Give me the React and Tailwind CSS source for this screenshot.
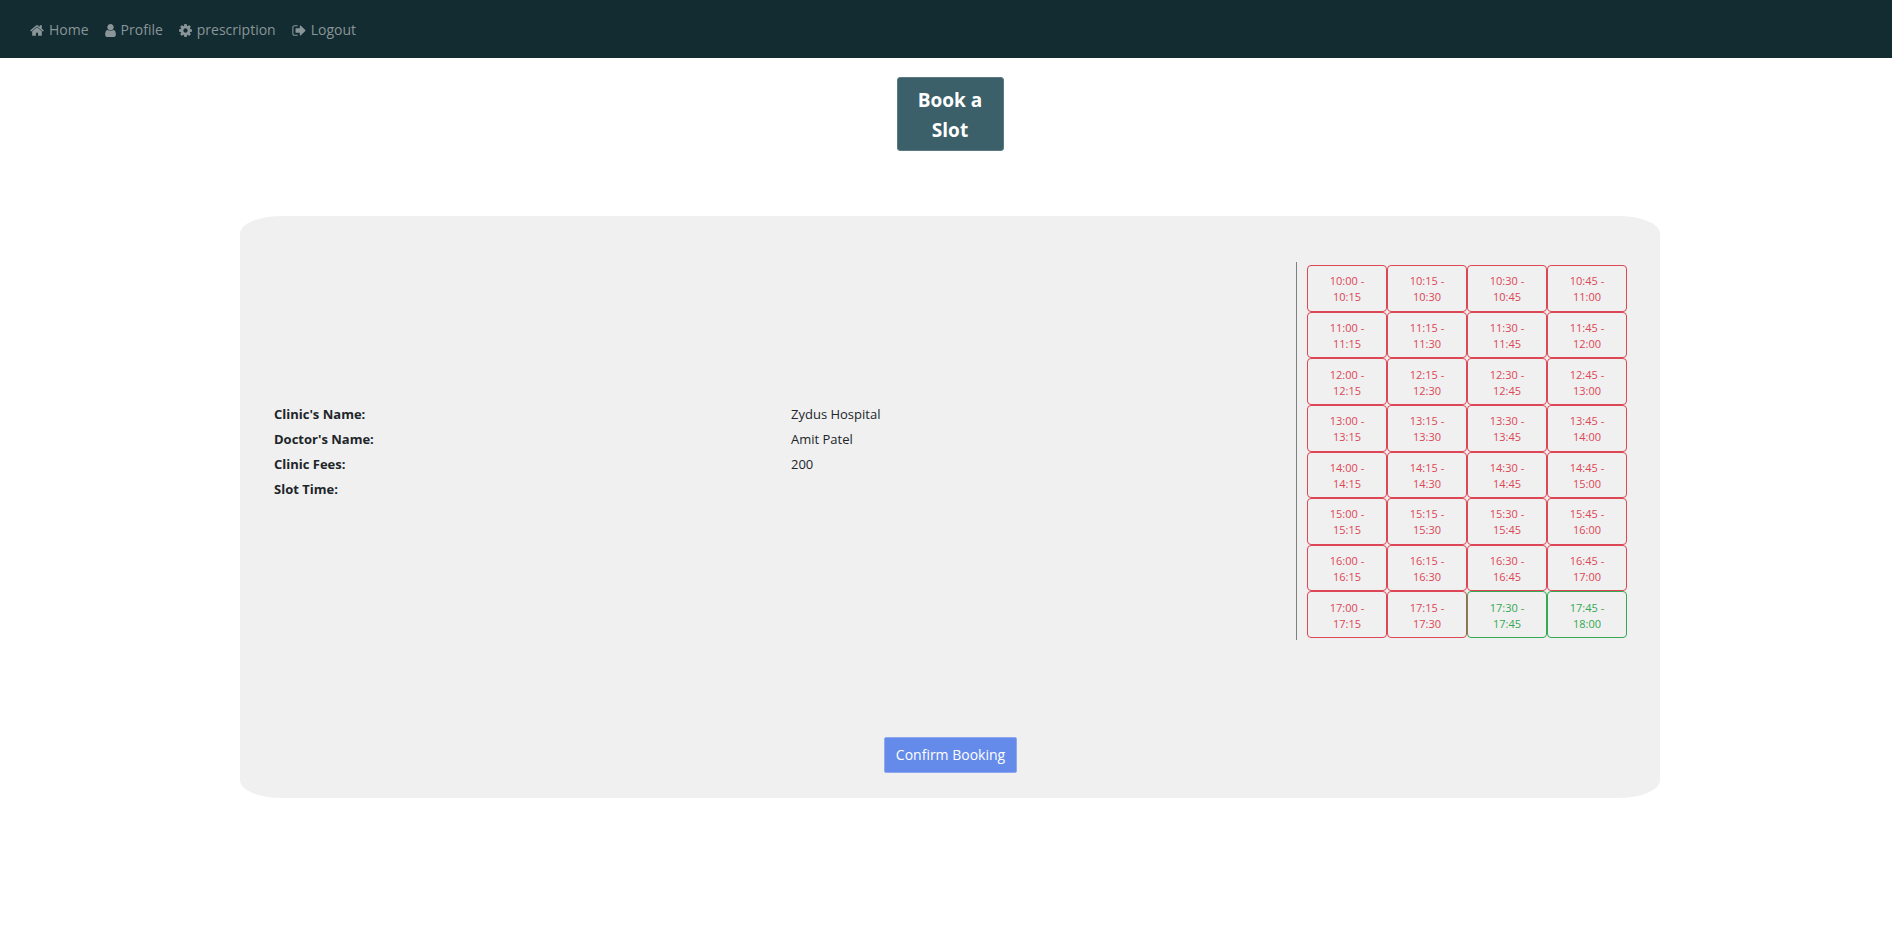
import React, { useState } from "react";

const NAV_ITEMS = [
  {
    label: "Home",
    viewBox: "64 0 1664 1792",
    width: "w-[14px]",
    path: "M1472 992v480q0 26-19 45t-45 19h-384v-384h-256v384h-384q-26 0-45-19t-19-45v-480q0-1 .5-3t.5-3l575-474 575 474q1 2 1 6zm223-69l-62 74q-8 9-21 11h-3q-13 0-21-7l-692-577-692 577q-12 8-24 7-13-2-21-11l-62-74q-8-10-7-23.5t11-21.5l719-599q32-26 76-26t76 26l244 204v-195q0-14 9-23t23-9h192q14 0 23 9t9 23v408l219 182q10 8 11 21.5t-7 23.5z",
  },
  {
    label: "Profile",
    viewBox: "256 0 1280 1792",
    width: "w-[11px]",
    path: "M1536 1399q0 109-62.5 187t-150.5 78h-854q-88 0-150.5-78t-62.5-187q0-85 8.5-160.5t31.5-152 58.5-131 94-89 134.5-34.5q131 128 313 128t313-128q76 0 134.5 34.5t94 89 58.5 131 31.5 152 8.5 160.5zm-256-887q0 159-112.5 271.5t-271.5 112.5-271.5-112.5-112.5-271.5 112.5-271.5 271.5-112.5 271.5 112.5 112.5 271.5z",
  },
  {
    label: "prescription",
    viewBox: "128 0 1536 1792",
    width: "w-[13px]",
    path: "M1152 896q0-106-75-181t-181-75-181 75-75 181 75 181 181 75 181-75 75-181zm512-109v222q0 12-8 23t-20 13l-185 28q-19 54-39 91 35 50 107 138 10 12 10 25t-9 23q-27 37-99 108t-94 71q-12 0-26-9l-138-108q-44 23-91 38-16 136-29 186-7 28-36 28h-222q-14 0-24.5-8.5t-11.5-21.5l-28-184q-49-16-90-37l-141 107q-10 9-25 9-14 0-25-11-126-114-165-168-7-10-7-23 0-12 8-23 15-21 51-66.5t54-70.5q-27-50-41-99l-183-27q-13-2-21-12.5t-8-23.5v-222q0-12 8-23t19-13l186-28q14-46 39-92-40-57-107-138-10-12-10-24 0-10 9-23 26-36 98.5-107.5t94.5-71.5q13 0 26 10l138 107q44-23 91-38 16-136 29-186 7-28 36-28h222q14 0 24.5 8.5t11.5 21.5l28 184q49 16 90 37l142-107q9-9 24-9 13 0 25 10 129 119 165 170 7 8 7 22 0 12-8 23-15 21-51 66.5t-54 70.5q26 50 41 98l183 28q13 2 21 12.5t8 23.5z",
  },
  {
    label: "Logout",
    viewBox: "64 0 1600 1792",
    width: "w-[14px]",
    path: "M704 1440q0 4 1 20t.5 26.5-3 23.5-10 19.5-20.5 6.5h-320q-119 0-203.5-84.5t-84.5-203.5v-704q0-119 84.5-203.5t203.5-84.5h320q13 0 22.5 9.5t9.5 22.5q0 4 1 20t.5 26.5-3 23.5-10 19.5-20.5 6.5h-320q-66 0-113 47t-47 113v704q0 66 47 113t113 47h312l11.5 1 11.5 3 8 5.5 7 9 2 13.5zm928-544q0 26-19 45l-544 544q-19 19-45 19t-45-19-19-45v-288h-448q-26 0-45-19t-19-45v-384q0-26 19-45t45-19h448v-288q0-26 19-45t45-19 45 19l544 544q19 19 19 45z",
  },
];

const DETAILS = [
  ["Clinic's Name:", "Zydus Hospital"],
  ["Doctor's Name:", "Amit Patel"],
  ["Clinic Fees:", "200"],
  ["Slot Time:", ""],
];

const clock = (minutes) =>
  `${Math.floor(minutes / 60)}:${String(minutes % 60).padStart(2, "0")}`;

const SLOTS = Array.from({ length: 32 }, (_, i) => {
  const start = 600 + i * 15;
  return { start: clock(start), end: clock(start + 15), free: i >= 30 };
});

function NavBar() {
  return (
    <nav className="flex h-[58px] items-center gap-4 bg-[#132c31] px-[30px] pt-[2px]">
      {NAV_ITEMS.map((item) => (
        <a
          key={item.label}
          href="#"
          className="flex items-center gap-[5px] text-[14px] leading-6 text-[#899598]"
        >
          <svg
            viewBox={item.viewBox}
            className={`h-[15px] ${item.width}`}
            fill="currentColor"
            aria-hidden="true"
          >
            <path d={item.path} />
          </svg>
          {item.label}
        </a>
      ))}
    </nav>
  );
}

function SlotButton({ slot, onPick }) {
  const tone = slot.free
    ? "border-[#34a853] text-[#34a853]"
    : "border-[#dc4655] text-[#dc4655]";
  return (
    <button
      type="button"
      disabled={!slot.free}
      onClick={() => onPick(slot)}
      className={`flex flex-col items-center justify-center rounded border pt-[2px] text-[11px] leading-4 ${tone}`}
    >
      <span>{slot.start} -</span>
      <span>{slot.end}</span>
    </button>
  );
}

export default function App() {
  const [picked, setPicked] = useState("");

  return (
    <div className="min-h-screen bg-white font-['Open_Sans','Noto_Sans',sans-serif] text-[#212529]">
      <NavBar />
      <main className="flex flex-col pr-[232px] pl-[240px] pt-[19px]">
        <button
          type="button"
          className="w-[107px] self-center rounded-[3px] border border-[#5b7b82] bg-[#3c6069] px-4 pt-[7px] pb-[5px] text-[19px] leading-[30px] font-bold text-white"
        >
          Book a Slot
        </button>

        <section className="mt-[65px] flex flex-col rounded-[3%] bg-[#f0f0f0] pt-[46px] pr-[33px] pb-[25px] pl-[34px]">
          <div className="flex items-center">
            <dl className="flex-1 pt-[2px] text-[13px] leading-[25px]">
              {DETAILS.map(([label, value]) => (
                <div key={label} className="grid grid-cols-2 gap-3">
                  <dt className="font-bold">{label}</dt>
                  <dd>{label === "Slot Time:" ? picked : value}</dd>
                </div>
              ))}
            </dl>
            <div className="border-l border-[#808080] pt-[3px] pb-[2px] pl-[10px]">
              <div className="grid h-[373px] w-[320px] grid-cols-4 grid-rows-8">
                {SLOTS.map((slot) => (
                  <SlotButton
                    key={slot.start}
                    slot={slot}
                    onPick={(s) => setPicked(`${s.start} - ${s.end}`)}
                  />
                ))}
              </div>
            </div>
          </div>
          <button
            type="button"
            className="mt-[97px] h-9 self-center rounded-[2px] border border-[#8ea9ef] bg-[#648bea] px-[11px] text-[14px] leading-6 text-white"
          >
            Confirm Booking
          </button>
        </section>
      </main>
    </div>
  );
}
